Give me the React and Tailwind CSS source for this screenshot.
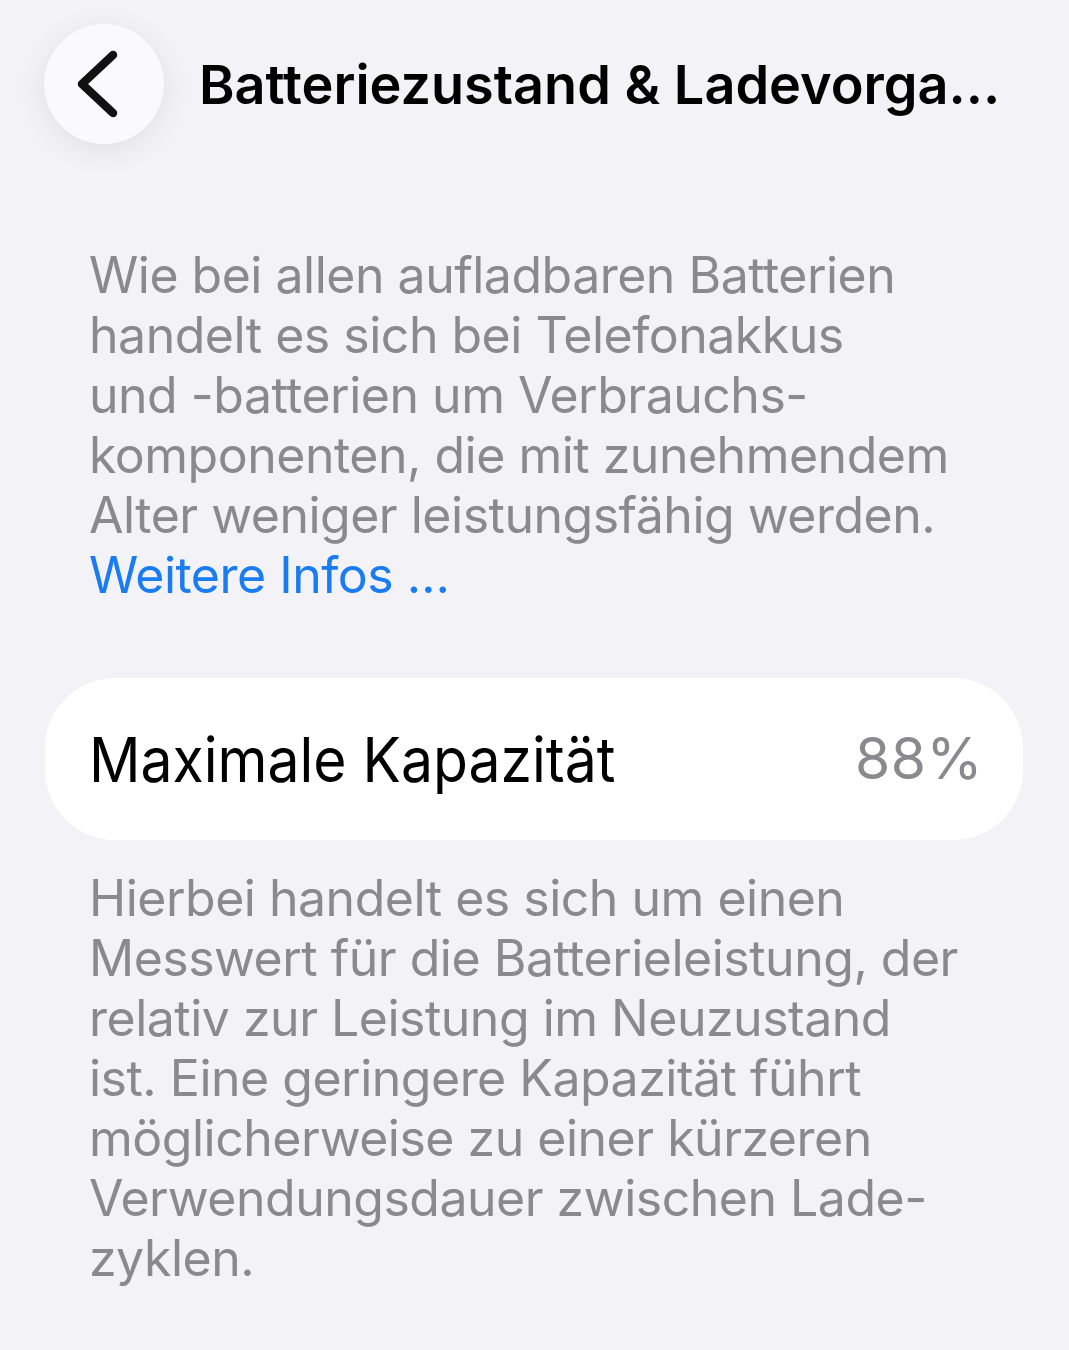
export default function App() {
  const font = { fontFamily: 'Inter, "Noto Sans", sans-serif' };
  return (
    <div className="w-[1069px] h-[1350px] bg-[#f2f2f7] overflow-hidden" style={font}>
      <div className="flex items-center pl-[44px] pt-[24px]">
        <div className="w-[120px] h-[120px] rounded-full bg-[#fafafc] shadow-[0_6px_30px_rgba(0,0,0,0.08)] flex items-center justify-center shrink-0">
          <svg width="120" height="120" viewBox="0 0 120 120">
            <path d="M69 31 L38 60 L69 89" fill="none" stroke="#111" strokeWidth="8.5" strokeLinecap="round" strokeLinejoin="round" />
          </svg>
        </div>
        <div className="ml-[35px] text-[54px] font-semibold text-black tracking-[0px] whitespace-nowrap">
          Batteriezustand &amp; Ladevorga...
        </div>
      </div>

      <p className="mt-[101px] pl-[89px] text-[50px] leading-[60px] text-[#8a8a8e] tracking-[-0.5px] whitespace-nowrap">
        Wie bei allen aufladbaren Batterien<br />
        handelt es sich bei Telefonakkus<br />
        und -batterien um Verbrauchs-<br />
        komponenten, die mit zunehmendem<br />
        Alter weniger leistungsfähig werden.<br />
        <span className="text-[#1a7cf2]">Weitere Infos …</span>
      </p>

      <div className="mt-[73px] ml-[45px] mr-[46px] h-[162px] rounded-[70px] bg-white flex items-center justify-between pl-[44px] pr-[40px]">
        <span className="text-[62px] text-black inline-block origin-left scale-x-[0.92] whitespace-nowrap">Maximale Kapazität</span>
        <span className="text-[57px] text-[#8a8a8e] tracking-[0.5px]">88%</span>
      </div>

      <p className="mt-[28px] pl-[89px] text-[50px] leading-[60px] text-[#8a8a8e] tracking-[-0.5px] whitespace-nowrap">
        Hierbei handelt es sich um einen<br />
        Messwert für die Batterieleistung, der<br />
        relativ zur Leistung im Neuzustand<br />
        ist. Eine geringere Kapazität führt<br />
        möglicherweise zu einer kürzeren<br />
        Verwendungsdauer zwischen Lade-<br />
        zyklen.
      </p>
    </div>
  );
}
